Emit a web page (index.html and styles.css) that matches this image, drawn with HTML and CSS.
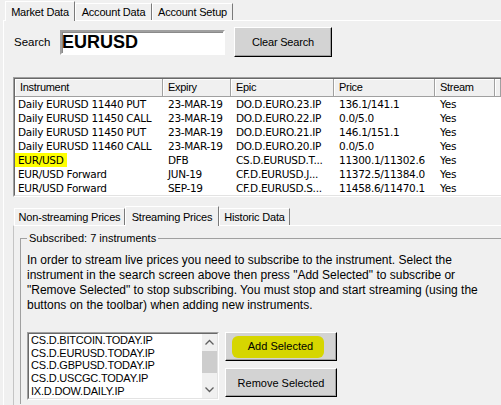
FILE: index.html
```html
<!DOCTYPE html>
<html lang="en">

<head>
    <meta charset="UTF-8" />
    <title>Market Data</title>
    <link rel="stylesheet" href="styles.css">
</head>

<body>

    <!-- Top tabs -->
    <div class="tabstrip top-tabs">
        <div class="tab active tab-market">Market Data</div>
        <div class="tab tab-account">Account Data</div>
        <div class="tab tab-setup">Account Setup</div>
    </div>

    <div class="tab-page outer-page">
        <!-- Search -->
        <div class="search-row">
            <label class="search-label">Search</label>
            <input class="search-input" type="text" value="EURUSD" />
            <button class="btn clear-btn">Clear Search</button>
        </div>

        <!-- Instruments grid -->
        <div class="grid-box">
            <div class="grid-inner">
                <div class="grid-row grid-head">
                    <div>Instrument</div>
                    <div>Expiry</div>
                    <div>Epic</div>
                    <div>Price</div>
                    <div>Stream</div>
                    <div></div>
                </div>
                <div class="grid-row">
                    <div>Daily EURUSD 11440 PUT</div>
                    <div>23-MAR-19</div>
                    <div>DO.D.EURO.23.IP</div>
                    <div>136.1/141.1</div>
                    <div>Yes</div>
                    <div></div>
                </div>
                <div class="grid-row">
                    <div>Daily EURUSD 11450 CALL</div>
                    <div>23-MAR-19</div>
                    <div>DO.D.EURO.22.IP</div>
                    <div>0.0/5.0</div>
                    <div>Yes</div>
                    <div></div>
                </div>
                <div class="grid-row">
                    <div>Daily EURUSD 11450 PUT</div>
                    <div>23-MAR-19</div>
                    <div>DO.D.EURO.21.IP</div>
                    <div>146.1/151.1</div>
                    <div>Yes</div>
                    <div></div>
                </div>
                <div class="grid-row">
                    <div>Daily EURUSD 11460 CALL</div>
                    <div>23-MAR-19</div>
                    <div>DO.D.EURO.20.IP</div>
                    <div>0.0/5.0</div>
                    <div>Yes</div>
                    <div></div>
                </div>
                <div class="grid-row">
                    <div><span class="hl">EUR/USD</span></div>
                    <div>DFB</div>
                    <div>CS.D.EURUSD.T...</div>
                    <div>11300.1/11302.6</div>
                    <div>Yes</div>
                    <div></div>
                </div>
                <div class="grid-row">
                    <div>EUR/USD Forward</div>
                    <div>JUN-19</div>
                    <div>CF.D.EURUSD.J...</div>
                    <div>11372.5/11384.0</div>
                    <div>Yes</div>
                    <div></div>
                </div>
                <div class="grid-row">
                    <div>EUR/USD Forward</div>
                    <div>SEP-19</div>
                    <div>CF.D.EURUSD.S...</div>
                    <div>11458.6/11470.1</div>
                    <div>Yes</div>
                    <div></div>
                </div>
            </div>
        </div>

        <!-- Price tabs -->
        <div class="tabstrip sub-tabs">
            <div class="tab tab-nonstream">Non-streaming Prices</div>
            <div class="tab active tab-stream">Streaming Prices</div>
            <div class="tab tab-historic">Historic Data</div>
        </div>

        <div class="tab-page inner-page">
            <fieldset class="group">
                <legend>Subscribed: 7 instruments</legend>
                <p class="help">
                    In order to stream live prices you need to subscribe to the instrument. Select the<br>
                    instrument in the search screen above then press "Add Selected" to subscribe or<br>
                    "Remove Selected" to stop subscribing. You must stop and start streaming (using the<br>
                    buttons on the toolbar) when adding new instruments.
                </p>

                <div class="sub-row">
                    <div class="listbox">
                        <div class="listbox-inner">
                            <ul class="items">
                                <li>CS.D.BITCOIN.TODAY.IP</li>
                                <li>CS.D.EURUSD.TODAY.IP</li>
                                <li>CS.D.GBPUSD.TODAY.IP</li>
                                <li>CS.D.USCGC.TODAY.IP</li>
                                <li>IX.D.DOW.DAILY.IP</li>
                            </ul>
                            <div class="vscroll">
                                <div class="arrow">
                                    <svg width="15" height="17" viewBox="0 0 15 17">
                                        <path d="M3.5 10.5 L7.5 6.5 L11.5 10.5" fill="none" stroke="#606060" stroke-width="1.3" />
                                    </svg>
                                </div>
                                <div class="thumb"></div>
                                <div class="track"></div>
                                <div class="arrow">
                                    <svg width="15" height="17" viewBox="0 0 15 17">
                                        <path d="M3.5 6.5 L7.5 10.5 L11.5 6.5" fill="none" stroke="#606060" stroke-width="1.3" />
                                    </svg>
                                </div>
                            </div>
                        </div>
                    </div>

                    <div class="side-buttons">
                        <button class="btn side-btn"><span class="marker">Add Selected</span></button>
                        <button class="btn side-btn">Remove Selected</button>
                    </div>
                </div>
            </fieldset>
        </div>
    </div>

</body>

</html>
```

FILE: styles.css
```css
* {
    margin: 0;
    padding: 0;
    box-sizing: border-box;
}

body {
    width: 501px;
    height: 405px;
    overflow: hidden;
    background-color: #f0f0f0;
    color: #000;
    font-family: "Liberation Sans", Arial, sans-serif;
    font-size: 11px;
}

/* Tabs */
.tabstrip {
    display: flex;
    align-items: flex-end;
}

.top-tabs {
    height: 20px;
    padding-left: 5px;
}

.sub-tabs {
    height: 28px;
    padding-left: 1px;
}

.tab {
    display: flex;
    align-items: center;
    justify-content: center;
    height: 17px;
    border-top: 1px solid #fff;
    border-left: 1px solid #fff;
    border-right: 1px solid #7a7a7a;
    letter-spacing: -0.2px;
    white-space: nowrap;
}

.tab.active {
    position: relative;
    z-index: 1;
    height: 20px;
    margin-bottom: -1px;
    background-color: #f0f0f0;
}

.tab-market { width: 70px; }
.tab-account { width: 77px; }
.tab-setup { width: 81px; }
.tab-nonstream { width: 111px; }
.tab-stream { width: 94px; }
.tab-historic { width: 71px; }

.tab-page {
    border-top: 1px solid #fff;
}

.outer-page {
    width: 498px;
    height: 385px;
    margin-left: 3px;
    border-left: 1px solid #fff;
    padding: 6px 0 0 9px;
}

.inner-page {
    width: 488px;
    height: 180px;
    border-left: 1px solid #c4c4c4;
    padding-top: 6px;
}

/* Search */
.search-row {
    display: flex;
    align-items: center;
    height: 30px;
}

.search-label {
    width: 46px;
    margin-left: 1px;
    font-size: 11.5px;
}

.search-input {
    width: 165px;
    height: 25px;
    margin-right: 9px;
    padding: 0;
    border: 2px solid;
    border-color: #a0a0a0 #fff #fff #a0a0a0;
    box-shadow: inset 1px 1px 0 #8a8a8a;
    background-color: #fff;
    font-family: "Liberation Sans", Arial, sans-serif;
    font-size: 18px;
    font-weight: bold;
    color: #000;
    outline: none;
}

.btn {
    display: flex;
    align-items: center;
    justify-content: center;
    background-color: #d3d3d3;
    border: 1px solid;
    border-color: #fff #000 #000 #fff;
    box-shadow: inset -1px -1px 0 #a0a0a0;
    font-family: "Liberation Sans", Arial, sans-serif;
    font-size: 11px;
    color: #000;
}

.clear-btn {
    width: 98px;
    height: 30px;
    letter-spacing: -0.2px;
}

/* Grid */
.grid-box {
    width: 488px;
    height: 120px;
    margin-top: 20px;
    border: 1px solid;
    border-color: #a0a0a0 #fff #fff #a0a0a0;
    border-right-width: 0;
}

.grid-inner {
    height: 100%;
    border: 1px solid;
    border-color: #696969 #e3e3e3 #e3e3e3 #696969;
    border-right-width: 0;
    background-color: #fff;
}

.grid-row {
    display: grid;
    grid-template-columns: 148px 68px 103px 101px 60px 1fr;
    height: 14px;
    line-height: 14px;
    font-family: "DejaVu Sans", Verdana, sans-serif;
    font-size: 10.5px;
    letter-spacing: -0.3px;
}

.grid-row div {
    padding-left: 5px;
    white-space: nowrap;
    overflow: hidden;
}

.grid-row div:first-child {
    padding-left: 3px;
}

.grid-head {
    height: 18px;
    line-height: 17px;
    background-color: #f0f0f0;
    font-family: "Liberation Sans", Arial, sans-serif;
    font-size: 11px;
    letter-spacing: -0.3px;
}

.grid-head div,
.grid-head div:first-child {
    padding-left: 5px;
    border-right: 1px solid #a0a0a0;
    border-bottom: 1px solid #a0a0a0;
    box-shadow: inset 1px 1px 0 #fff;
}

.hl {
    margin-left: -3px;
    padding: 1px 3px;
    background-color: #ffff00;
}

/* Group box */
.group {
    width: 481px;
    height: 172px;
    margin-left: 6px;
    padding: 0 0 0 6px;
    border: 1px solid #a0a0a0;
    border-right-width: 0;
    border-bottom-width: 0;
}

.group legend {
    padding: 0 2px;
    line-height: 13px;
    font-size: 11px;
}

.help {
    margin-top: 8px;
    font-size: 12px;
    line-height: 15px;
    white-space: nowrap;
}

.sub-row {
    display: flex;
    gap: 6px;
    margin-top: 19px;
}

.listbox {
    width: 192px;
    height: 68px;
    border: 1px solid;
    border-color: #a0a0a0 #fff #fff #a0a0a0;
}

.listbox-inner {
    display: flex;
    height: 100%;
    border: 1px solid;
    border-color: #696969 #e3e3e3 #e3e3e3 #696969;
    background-color: #fff;
}

.items {
    flex: 1;
    list-style: none;
    padding-left: 2px;
    font-size: 11px;
    line-height: 12.7px;
    letter-spacing: -0.2px;
    overflow: hidden;
}

.vscroll {
    display: flex;
    flex-direction: column;
    width: 15px;
    background-color: #f0f0f0;
}

.arrow {
    height: 17px;
}

.arrow svg {
    display: block;
}

.thumb {
    height: 22px;
    background-color: #cdcdcd;
}

.track {
    flex: 1;
}

.side-buttons {
    display: flex;
    flex-direction: column;
    gap: 7px;
}

.side-btn {
    width: 112px;
    height: 29px;
}

.marker {
    display: inline-block;
    margin-left: -6px;
    padding: 4px 11px 5px 16px;
    line-height: 13px;
    background-color: #d6d600;
    border-radius: 6px;
}
```
